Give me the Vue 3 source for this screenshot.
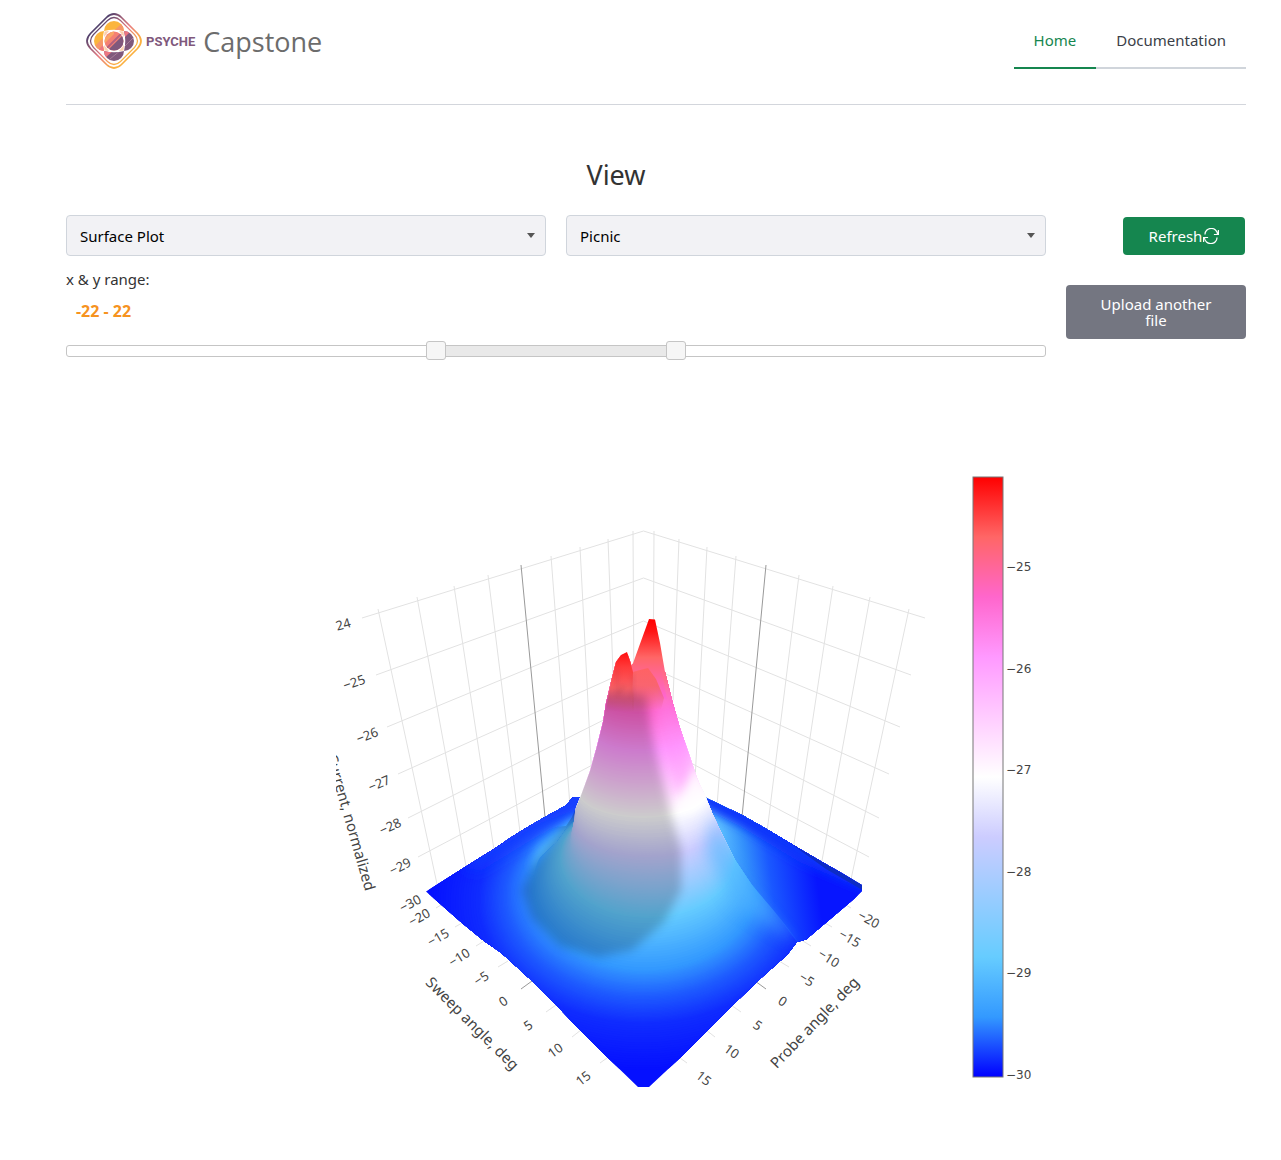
<script setup>
import { ref, computed } from 'vue'

const plotType = ref('Surface Plot')
const scheme = ref('Picnic')
const low = ref(-22)
const high = ref(22)
const percent = (v) => ((Number(v) + 90) / 180) * 100
const rangeStyle = computed(() => ({
  left: percent(low.value) + '%',
  width: percent(high.value) - percent(low.value) + '%'
}))

// The two back walls mirror each other about this x.
const MID = 643.5
const mirror = ([x1, y1, x2, y2]) => [2 * MID - x1, y1, 2 * MID - x2, y2]
const wallRows = [
  [362, 618, MID, 531],
  [376, 675, MID, 578],
  [387, 727, MID, 621],
  [398, 774, MID, 664],
  [408, 818, MID, 700],
  [418, 857, MID, 738]
]
const wallColumns = [
  [378, 609, 437, 884],
  [417, 597, 466, 866],
  [454, 586, 494, 850],
  [488, 575, 520, 832],
  [551, 556, 570, 806],
  [580, 547, 593, 800],
  [608, 539, 614, 700],
  [633, 531, 634, 700]
]
const floorTicks = [
  [436, 908, 441, 905],
  [455, 927, 462, 923],
  [476, 946, 484, 941],
  [498, 967, 508, 961],
  [546, 1012, 556, 1005],
  [572, 1037, 581, 1030],
  [600, 1063, 607, 1058]
]
const zeroLines = [
  [521, 565, 545, 817],
  [521, 989, 532, 981]
]
const both = (list) => list.concat(list.map(mirror))
const gridLines = both([...wallRows, ...wallColumns, ...floorTicks])
const darkLines = both(zeroLines)

const labels = [
  ['24', 343, 624, -16], ['−25', 354, 682, -19], ['−26', 367, 735, -21],
  ['−27', 379, 783, -23], ['−28', 390, 826, -25], ['−29', 400, 866, -27],
  ['−30', 410, 903, -28], ['−20', 419, 917, -29], ['−15', 438, 937, -30],
  ['−10', 459, 957, -32], ['−5', 481, 978, -33], ['0', 503, 1001, -34],
  ['5', 528, 1025, -35], ['10', 555, 1050, -36], ['15', 583, 1078, -38],
  ['−20', 869, 919, 29], ['−15', 850, 938, 30], ['−10', 829, 958, 32],
  ['−5', 807, 979, 33], ['0', 783, 1001, 34], ['5', 758, 1025, 35],
  ['10', 732, 1051, 36], ['15', 704, 1078, 38]
]
const barLabels = [-25, -26, -27, -28, -29, -30].map((v, i) => ['−' + -v, 571 + Math.round(i * 101.6)])
const picnic = ['#f00', '#f66', '#f6c', '#f9f', '#fcf', '#fff', '#ccf', '#9cf', '#6cf', '#39f', '#00f']

// Height contours: red, green, blue, centre x, centre y, radius x, radius y.
const floorKeys = [
  [5, 16, 255, 643, 905, 215, 165],
  [16, 44, 255, 643, 900, 165, 124],
  [30, 90, 255, 643, 896, 138, 102],
  [51, 153, 255, 645, 886, 112, 84],
  [102, 204, 255, 648, 858, 88, 60]
]
const coneKeys = [
  floorKeys[3],
  floorKeys[4],
  [153, 204, 255, 650, 843, 80, 46],
  [204, 204, 255, 648, 823, 74, 34],
  [255, 255, 255, 643, 790, 66, 28],
  [255, 204, 255, 642, 763, 58, 22],
  [255, 153, 255, 643, 733, 50, 18],
  [255, 102, 204, 640, 696, 44, 18],
  [255, 102, 120, 638, 668, 38, 16]
]
const STEPS = 20
function blend(keys) {
  const out = []
  for (let k = 0; k < keys.length - 1; k++) {
    for (let s = 0; s < STEPS; s++) {
      const t = s / STEPS
      const v = keys[k].map((a, i) => a + (keys[k + 1][i] - a) * t)
      out.push({ fill: `rgb(${v[0]},${v[1]},${v[2]})`, cx: v[3], cy: v[4], rx: v[5], ry: v[6] })
    }
  }
  return out
}
const floorRings = blend(floorKeys)
const coneRings = blend(coneKeys)
</script>

<template>
  <div class="page">
    <header class="top">
      <a class="brand" href="#">
        <svg class="logo" viewBox="0 0 56 56" aria-hidden="true">
          <defs>
            <linearGradient id="frame" gradientUnits="userSpaceOnUse" x1="12" y1="12" x2="44" y2="44">
              <stop offset="0" stop-color="#4d3f6b" />
              <stop offset="0.5" stop-color="#e87a80" />
              <stop offset="0.9" stop-color="#fbb040" />
            </linearGradient>
            <clipPath id="core"><circle cx="28" cy="28" r="9.500" /></clipPath>
            <clipPath id="north"><path d="M18 18a10 10 0 0 1 20 0q-10-2.500-20 0z" /></clipPath>
            <clipPath id="west"><path d="M18 18a10 10 0 0 0 0 20q-2.500-10 0-20z" /></clipPath>
            <clipPath id="east"><path d="M38 18a10 10 0 0 1 0 20q2.500-10 0-20z" /></clipPath>
            <clipPath id="south"><path d="M18 38a10 10 0 0 0 20 0q-10 2.500-20 0z" /></clipPath>
          </defs>
          <g fill="none" stroke="url(#frame)">
            <path d="M20.500 4.500Q28-2.500 35.500 4.500L51.500 20.500Q58.500 28 51.500 35.500L35.500 51.500Q28 58.500 20.500 51.500L4.500 35.500Q-2.500 28 4.500 20.500Z" stroke-width="1.700" />
            <path d="M21.500 7.500Q28 1.500 34.500 7.500L48.500 21.500Q54.500 28 48.500 34.500L34.500 48.500Q28 54.500 21.500 48.500L7.500 34.500Q1.500 28 7.500 21.500Z" stroke-width="1.200" />
          </g>
          <path d="M18 18q10-2.500 20 0 2.500 10 0 20-10 2.500-20 0-2.500-10 0-20z" fill="#fff" />
          <path d="M18.500 18.500 23 18l-5 6zM37.500 18.500 33 18l5 6zM18.500 37.500 23 38l-5-6zM37.500 37.500 33 38l5-6z" fill="#f9a05b" opacity="0.5" />
          <g clip-path="url(#north)">
            <path d="M16 6h24v14H16z" fill="#fbb53d" />
            <path d="M25 20 40 7v13z" fill="#f6966a" />
          </g>
          <g clip-path="url(#west)">
            <path d="M6 16h14v24H6z" fill="#fbb53d" />
            <path d="M20 22 9 33v7h11z" fill="#f6966a" />
            <path d="M20 29 12 37l8 3z" fill="#ee7681" />
          </g>
          <g clip-path="url(#east)">
            <path d="M36 16h14v24H36z" fill="#80587c" />
            <path d="M36 16h11L36 27z" fill="#ee7681" />
            <path d="M38 34 49 23" stroke="#a77b98" />
          </g>
          <g clip-path="url(#south)">
            <path d="M16 36h24v14H16z" fill="#80587c" />
            <path d="M16 36h13L18 46z" fill="#ee7681" />
            <path d="M24 46 35 37" stroke="#a77b98" />
          </g>
          <g clip-path="url(#core)">
            <path d="M18 18h20v20H18z" fill="#f48073" />
            <path d="M16 28 28 16v5L16 33z" fill="#f9a566" />
            <path d="M20 39 39 20v19z" fill="#80587c" />
            <path d="M19 37 37 19" stroke="#b3617f" stroke-width="2" />
          </g>
        </svg>
        <span class="psyche">PSYCHE</span>
        <span class="capstone">Capstone</span>
      </a>
      <nav class="menu">
        <a class="active" href="#">Home</a>
        <a href="#docs">Documentation</a>
      </nav>
    </header>

    <main>
      <h1>View</h1>
      <div class="layout">
        <div class="controls">
          <div class="selects">
            <div class="select">
              <select v-model="plotType" aria-label="Plot type"><option>Surface Plot</option></select>
            </div>
            <div class="select">
              <select v-model="scheme" aria-label="Colour scheme"><option>Picnic</option></select>
            </div>
          </div>
          <label class="range-label" for="low">x &amp; y range:</label>
          <output class="range-value" for="low high">{{ low }} - {{ high }}</output>
          <div class="slider">
            <div class="fill" :style="rangeStyle"></div>
            <input id="low" v-model="low" type="range" min="-90" max="90" aria-label="Lower limit" />
            <input id="high" v-model="high" type="range" min="-90" max="90" aria-label="Upper limit" />
          </div>
        </div>
        <div class="actions">
          <button class="refresh" type="button">
            Refresh<svg viewBox="0 0 16 16" aria-hidden="true">
              <g fill="none" stroke="#fff" stroke-width="1.200">
                <path d="M2 6.500a6.200 5.800 0 0 1 12.500-.5M14 9.500A6.200 5.800 0 0 1 1.500 10" />
                <path d="M15.400 2v4.500h-4.500M.6 14V9.500h4.500" />
              </g>
            </svg>
          </button>
          <button class="upload" type="button">Upload another file</button>
        </div>

        <svg class="plot" viewBox="66 440 980 680" role="img" aria-label="Surface plot">
          <defs>
            <clipPath id="scene"><rect x="336" y="477" width="610" height="610" /></clipPath>
            <clipPath id="floor">
              <path d="M426 891.500 446 879 465 867 481 857 494 849 510 838 526 828 545 817 565 806 573 797.500H705L742 815 770 831 800 849 824 863 840 872 862 885V891L854 899 806 939.500 797 942 787 955 760 979 732 1006 707 1031 680 1058 649 1087H638L607 1057 581 1031 556 1005 532 981 507 958 500 952 484 941 462 923z" />
            </clipPath>
            <clipPath id="cone">
              <path d="M480 1000V880L535 862 557 842 566 829 572 817 580 798 590 771 597 746 603 722 606 703 611 682 616 662 621 655 627 652 630 661 633 671 646 668 652 660 665 672 672 700 680 728 690 757 697 778 706 798 713 815 720 830 735 860 752 885 775 912 797 940V1000z" />
            </clipPath>
            <clipPath id="shade">
              <path d="M470 1000V835L566 826 572 817 580 798 590 771 597 746 603 722 606 703 611 682 616 662 621 655 627 652 630 661 633 671 646 668 652 660 665 672 672 700 680 728 690 757 697 778 706 798V1000z" />
            </clipPath>
            <clipPath id="behind">
              <path d="M700 790 705 797 742 815 770 831 800 849 824 863 840 872 862 885V891L854 899 806 939.500 797 942 775 912 752 885 735 860 720 830 713 815z" />
            </clipPath>
            <linearGradient id="behindFill" gradientUnits="userSpaceOnUse" x1="722" y1="855" x2="812" y2="843">
              <stop offset="0" stop-color="#5cc0ff" />
              <stop offset="0.25" stop-color="#3390fb" />
              <stop offset="0.5" stop-color="#1a58ff" />
              <stop offset="1" stop-color="#0715ff" />
            </linearGradient>
            <linearGradient id="backPeak" gradientUnits="userSpaceOnUse" x1="0" y1="619" x2="0" y2="715">
              <stop offset="0" stop-color="#f00" />
              <stop offset="0.13" stop-color="#ff1414" />
              <stop offset="0.4" stop-color="#f66" />
              <stop offset="0.8" stop-color="#f6c" />
              <stop offset="1" stop-color="#ff7ae0" />
            </linearGradient>
            <linearGradient id="leftPeak" gradientUnits="userSpaceOnUse" x1="0" y1="652" x2="0" y2="712">
              <stop offset="0" stop-color="#ff1010" />
              <stop offset="0.25" stop-color="#ff3a3a" />
              <stop offset="0.6" stop-color="#f96066" />
              <stop offset="1" stop-color="#e95a93" stop-opacity="0" />
            </linearGradient>
            <linearGradient id="frontPeak" gradientUnits="userSpaceOnUse" x1="0" y1="669" x2="0" y2="710">
              <stop offset="0" stop-color="#ff6264" />
              <stop offset="0.4" stop-color="#f9646f" />
              <stop offset="1" stop-color="#e85c96" stop-opacity="0" />
            </linearGradient>
            <linearGradient id="bar" x1="0" y1="0" x2="0" y2="1">
              <stop v-for="(c, i) in picnic" :key="i" :offset="i / 10" :stop-color="c" />
            </linearGradient>
            <filter id="soft" x="-30%" y="-30%" width="160%" height="160%"><feGaussianBlur stdDeviation="5" /></filter>
            <filter id="softer" x="-50%" y="-50%" width="200%" height="200%"><feGaussianBlur stdDeviation="8" /></filter>
            <filter id="fine" x="-20%" y="-20%" width="140%" height="140%"><feGaussianBlur stdDeviation="2" /></filter>
          </defs>

          <g stroke="#e2e2e2">
            <line v-for="(l, i) in gridLines" :key="i" :x1="l[0]" :y1="l[1]" :x2="l[2]" :y2="l[3]" />
          </g>
          <g stroke="#999">
            <line v-for="(l, i) in darkLines" :key="i" :x1="l[0]" :y1="l[1]" :x2="l[2]" :y2="l[3]" />
          </g>

          <g clip-path="url(#floor)">
            <rect x="420" y="790" width="450" height="300" fill="#0510ff" />
            <ellipse v-for="(r, i) in floorRings" :key="i" v-bind="r" />
            <path d="M560 790H600V806L545 826 470 872V850z" fill="#143cff" filter="url(#softer)" />
            <path d="M538 848 578 815 575 830 556 850 530 870z" fill="#4fb4ff" filter="url(#soft)" />
          </g>
          <g clip-path="url(#behind)">
            <rect x="690" y="780" width="180" height="170" fill="url(#behindFill)" />
            <path d="M690 780 745 805 870 875V892L800 862 740 826 704 808z" fill="#0f36fa" filter="url(#soft)" />
            <path d="M715 838 760 895 797 940 770 925z" fill="#2a7dff" opacity="0.6" filter="url(#soft)" />
            <path d="M790 843 826 864 864 886V891L826 869z" fill="#0d2cc4" />
          </g>

          <path d="M632 666 649 619 655 619.500 660 643 665 672 672 700 676 715H630z" fill="url(#backPeak)" />
          <g clip-path="url(#cone)">
            <ellipse v-for="(r, i) in coneRings" :key="i" v-bind="r" />
            <path d="M713 815 735 852 765 895 797 942 735 905 705 850z" fill="#50b4ff" opacity="0.55" filter="url(#softer)" />
            <path d="M654 660 672 695 685 745 692 785 677 795 664 745 656 705z" fill="#ff8cfa" opacity="0.45" filter="url(#softer)" />
            <path d="M697 765 708 800 690 814 674 808 682 795z" fill="#fff" opacity="0.8" filter="url(#soft)" />
          </g>
          <path d="M632 664 646 660 656 658 662 672 667 700 660 696 650 675 646 668 633 672z" fill="url(#backPeak)" />
          <path d="M606 712 611 682 616 662 621 655 627 652 630 661 633 672 634 712z" fill="url(#leftPeak)" />
          <path d="M633 672 648 668 656 679 664 698 660 714 632 712z" fill="url(#frontPeak)" />
          <g clip-path="url(#shade)">
            <path d="M575 704 590 694 618 692 635 694 646 696 651 730 660 770 670 810 681 850 681 890 664 922 632 950 598 957 560 946 532 918 522 890 534 866 562 830z" fill="#000" opacity="0.2" filter="url(#soft)" />
            <path d="M617 668 618 694 626 684M633 674 632 698" fill="none" stroke="#a03048" stroke-width="2" opacity="0.25" filter="url(#fine)" />
          </g>

          <g class="ticks">
            <text v-for="(l, i) in labels" :key="i" :x="l[1]" :y="l[2]" :transform="`rotate(${l[3]} ${l[1]} ${l[2]})`">{{ l[0] }}</text>
          </g>
          <g class="titles">
            <text x="473" y="1023" transform="rotate(45 473 1023)">Sweep angle, deg</text>
            <text x="814" y="1022" transform="rotate(-46 814 1022)">Probe angle, deg</text>
            <g clip-path="url(#scene)">
              <text class="end" x="371" y="890" transform="rotate(74 371 890)">Current, normalized</text>
            </g>
          </g>

          <rect x="973" y="477" width="30" height="600" fill="url(#bar)" stroke="#777" />
          <g class="scale">
            <text v-for="l in barLabels" :key="l[0]" x="1006" :y="l[1]">{{ l[0] }}</text>
          </g>
        </svg>
      </div>
    </main>
  </div>
</template>

<style>
body {
  margin: 0;
  background: #fff;
}
</style>

<style scoped>
.page {
  padding: 0 35px 40px 66px;
  font-family: "Noto Sans", "Open Sans", sans-serif;
  font-size: 15px;
  color: #333;
}
.top {
  display: flex;
  justify-content: space-between;
  align-items: flex-start;
  height: 104px;
  border-bottom: 1px solid #d3d6dc;
}
.brand {
  display: flex;
  align-items: center;
  padding: 13px 20px;
  text-decoration: none;
}
.logo {
  width: 56px;
  height: 56px;
}
.psyche {
  margin-left: 4px;
  font: 700 13px Roboto, sans-serif;
  color: #80587c;
}
.capstone {
  margin-left: 8px;
  padding-top: 2px;
  font-size: 27px;
  font-family: "Open Sans", sans-serif;
  line-height: 36px;
  color: #6c6c6c;
}
.menu {
  display: flex;
  padding-top: 14px;
}
.menu a {
  padding: 14px 20px 15px;
  border-bottom: 2px solid #d0d5db;
  line-height: 24px;
  color: #3b3f48;
  text-decoration: none;
}
.menu a.active {
  border-color: #15864f;
  color: #15864f;
}
h1 {
  margin: 52px 80px 22px 0;
  font-size: 27px;
  font-weight: 400;
  line-height: 36px;
  text-align: center;
}
.layout {
  display: grid;
  grid-template-columns: minmax(0, 1fr) 180px;
  column-gap: 20px;
}
.selects {
  display: grid;
  grid-template-columns: 1fr 1fr;
  gap: 20px;
}
.select {
  position: relative;
}
.select::after {
  content: "";
  position: absolute;
  top: 18px;
  right: 11px;
  border: 4px solid transparent;
  border-top: 5px solid #555;
  border-bottom: 0;
  pointer-events: none;
}
select {
  appearance: none;
  display: block;
  width: 100%;
  height: 41px;
  padding: 0 13px;
  border: 1px solid #d0d5dc;
  border-radius: 4px;
  background: #f2f2f5;
  font: inherit;
  color: #000;
}
.range-label {
  display: block;
  margin-top: 11px;
  line-height: 24px;
}
.range-value {
  display: block;
  margin: 8px 10px 0;
  font-size: 16px;
  line-height: 24px;
  font-weight: 700;
  color: #f6931f;
}
.slider {
  position: relative;
  box-sizing: border-box;
  height: 12px;
  margin-top: 22px;
  border: 1px solid #c5c5c5;
  border-radius: 3px;
}
.fill {
  height: 100%;
  position: absolute;
  background: #e9e9e9;
}
.slider input {
  appearance: none;
  position: absolute;
  top: -5px;
  left: -10px;
  width: calc(100% + 20px);
  height: 19px;
  margin: 0;
  background: none;
  pointer-events: none;
}
.slider input::-webkit-slider-thumb {
  appearance: none;
  box-sizing: border-box;
  width: 20px;
  height: 19px;
  border: 1px solid #c5c5c5;
  border-radius: 3px;
  background: #f6f6f6;
  pointer-events: auto;
}
.actions {
  display: flex;
  flex-direction: column;
  align-items: flex-end;
  gap: 30px;
  padding-top: 2px;
}
button {
  border: 0;
  border-radius: 4px;
  font: inherit;
  line-height: 16px;
  color: #fff;
}
.refresh {
  display: flex;
  align-items: center;
  justify-content: center;
  width: 122px;
  height: 38px;
  margin-right: 1px;
  background: #15864f;
}
.refresh svg {
  width: 16px;
  height: 16px;
  margin-left: 1px;
}
.upload {
  width: 100%;
  height: 54px;
  padding: 0 30px;
  background: #747681;
}
.plot {
  display: block;
  width: 100%;
  margin-top: 83px;
}
.plot text {
  fill: #444;
  dominant-baseline: central;
}
.ticks text,
.titles text {
  font-family: "Noto Sans", "Open Sans", sans-serif;
  text-anchor: middle;
}
.ticks text {
  font-size: 13px;
}
.titles text {
  font-size: 15px;
}
.titles .end {
  text-anchor: end;
}
.scale text {
  font: 12px "DejaVu Sans", sans-serif;
}
.scale text {
  dominant-baseline: auto;
}
</style>
